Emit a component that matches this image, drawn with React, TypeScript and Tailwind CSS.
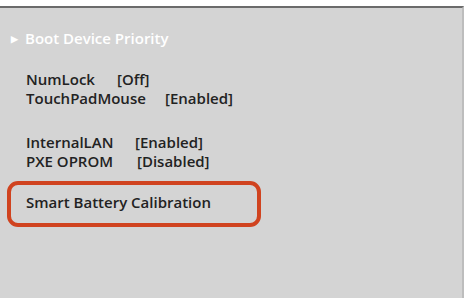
export default function App() {
  return (
    <div className="w-[468px] h-[298px] bg-white overflow-hidden flex flex-col">
      <div className="h-[6px] bg-white" />
      <div className="flex flex-1">
        <div className="flex-1 bg-[#d4d4d4] border-t-2 border-t-[#6b6b6b] border-r-2 border-r-[#bdbdbd] font-['Open_Sans','Noto_Sans',sans-serif] font-semibold text-[15px] leading-[19px] text-[#222]">
          <div className="flex items-center pl-[11px] pt-[21px] text-white">
            <span className="text-[9px] mr-[7px]">▶</span>
            <span>Boot Device Priority</span>
          </div>
          <div className="pl-[26px] pt-[22px]">
            <div className="flex">
              <span className="w-[91px]">NumLock</span>
              <span>[Off]</span>
            </div>
            <div className="flex">
              <span className="w-[139px]">TouchPadMouse</span>
              <span>[Enabled]</span>
            </div>
          </div>
          <div className="pl-[26px] pt-[25px]">
            <div className="flex">
              <span className="w-[109px]">InternalLAN</span>
              <span>[Enabled]</span>
            </div>
            <div className="flex">
              <span className="w-[111px]">PXE OPROM</span>
              <span>[Disabled]</span>
            </div>
          </div>
          <div className="ml-[7px] mt-[10px] w-[254px] h-[46px] border-4 border-[#d0431f] rounded-[11px] flex items-center pl-[15px] pb-[3px]">
            Smart Battery Calibration
          </div>
        </div>
        <div className="w-[4px] bg-white" />
      </div>
    </div>
  );
}
